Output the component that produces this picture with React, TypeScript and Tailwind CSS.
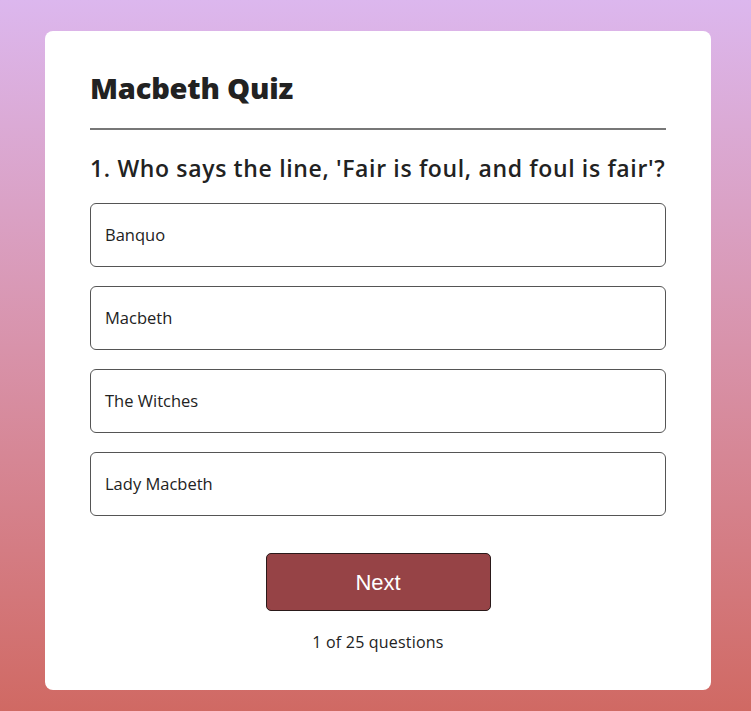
import React, { useState } from "react";

const options = ["Banquo", "Macbeth", "The Witches", "Lady Macbeth"];

const App: React.FC = () => {
  const [picked, setPicked] = useState<number | null>(null);

  return (
    <div className="min-h-[711px] w-full bg-gradient-to-b from-[#dcb7ee] to-[#d06963] pt-[31px] pl-[45px] pr-[40px] pb-[22px] font-['Open_Sans',sans-serif]">
      <div className="w-[666px] rounded-lg bg-white px-[45px] pt-[36px] pb-[36px]">
        {/* title */}
        <h1 className="text-[29px] leading-[42px] font-extrabold text-[#222] tracking-[-0.2px]">
          Macbeth Quiz
        </h1>
        <div className="mt-[19px] h-[2px] bg-[#777]" />

        {/* question */}
        <h2 className="mt-[22px] text-[23px] leading-[32px] font-semibold text-[#222] tracking-[0.65px]">
          1. Who says the line, 'Fair is foul, and foul is fair'?
        </h2>

        <div className="mt-[19px] flex flex-col gap-[19px]">
          {options.map((o, i) => (
            <button
              key={o}
              onClick={() => setPicked(i)}
              className={
                picked === i
                  ? "h-[64px] w-full rounded-md border border-[#555] bg-[#f3e6e6] px-[14px] text-left text-[16.5px] text-[#222]"
                  : "h-[64px] w-full rounded-md border border-[#555] bg-white px-[14px] text-left text-[16.5px] text-[#222]"
              }
            >
              {o}
            </button>
          ))}
        </div>

        <div className="mt-[37px] flex flex-col items-center">
          <button className="h-[58px] w-[225px] rounded-[5px] border border-[#2a1a1a] bg-[#964346] text-[22px] text-white font-['Liberation_Sans',sans-serif]">
            Next
          </button>
          <p className="mt-[19px] text-[16px] leading-[24px] text-[#222] tracking-[0.2px]">
            1 of 25 questions
          </p>
        </div>
      </div>
    </div>
  );
};

export default App;
